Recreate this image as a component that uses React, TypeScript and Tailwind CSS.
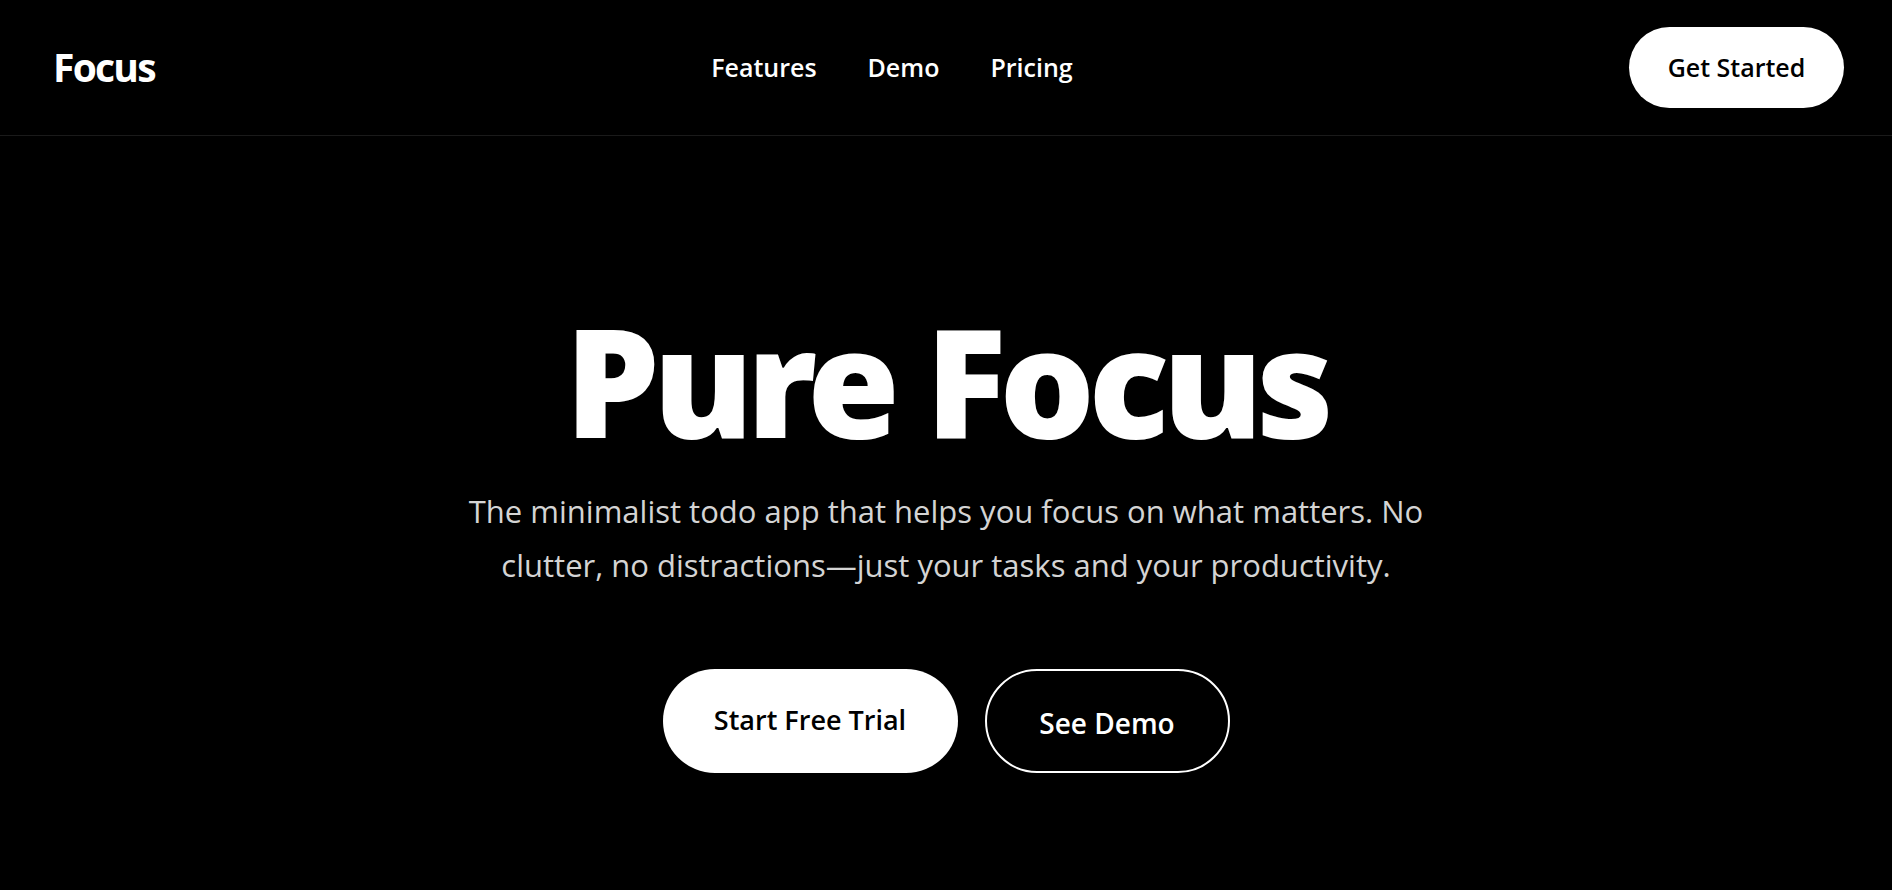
import React from 'react';

const navLinks = ['Features', 'Demo', 'Pricing'];

const Header: React.FC = () => (
    <header className="flex h-[136px] items-center justify-between border-b border-white/10 pl-[53px] pr-12">
        <a href="#" className="text-[39px] font-bold tracking-[-0.045em] text-white">Focus</a>
        <nav className="flex items-center gap-[51px]">
            {navLinks.map(link => (
                <a key={link} href="#" className="text-[25px] font-semibold text-white">{link}</a>
            ))}
        </nav>
        <button className="flex h-[81px] w-[215px] items-center justify-center rounded-full bg-white text-[25px] font-semibold text-black">
            Get Started
        </button>
    </header>
);

const App: React.FC = () => {
    return (
        <div className="min-h-screen bg-black font-['Open_Sans','Noto_Sans',sans-serif] text-white">
            <Header />
            <main className="flex flex-col items-center px-6 pt-[169px] text-center">
                <h1 className="font-['Noto_Sans','Open_Sans',sans-serif] text-[150px] font-black leading-none tracking-[-0.045em]">
                    Pure Focus
                </h1>
                <p className="mt-[29px] max-w-[990px] text-[31px] leading-[54px] text-[#d4d4d4]">
                    The minimalist todo app that helps you focus on what matters. No clutter, no distractions—just your tasks and your productivity.
                </p>
                <div className="mt-[77px] flex items-center gap-[27px]">
                    <button className="flex h-[104px] w-[295px] items-center justify-center rounded-full bg-white pb-[2px] text-[27px] font-semibold text-black">
                        Start Free Trial
                    </button>
                    <button className="flex h-[104px] w-[245px] items-center justify-center rounded-full border-2 border-white pt-[4px] text-[28px] font-semibold text-white">
                        See Demo
                    </button>
                </div>
            </main>
        </div>
    );
};

export default App;
